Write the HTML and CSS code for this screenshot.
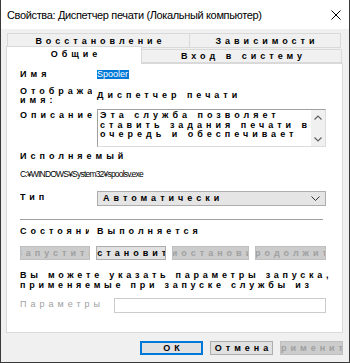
FILE: index.html
```html
<!DOCTYPE html>
<html lang="ru">
  <head>
    <meta charset="UTF-8" />
    <title>Свойства: Диспетчер печати</title>
    <link rel="stylesheet" href="styles.css">
  </head>
  <body>
    <div class="window">
      <div class="titlebar">
        <span class="title">Свойства: Диспетчер печати (Локальный компьютер)</span>
        <svg class="close" width="10" height="10" viewBox="0 0 10 10">
          <path d="M0.5 0.5 L9.5 9.5 M9.5 0.5 L0.5 9.5" stroke="#000" stroke-width="1" fill="none"/>
        </svg>
      </div>
      <div class="dialog">
        <div class="tabrow back">
          <div class="tab tab-restore"><span>Восстановление</span></div>
          <div class="tab tab-deps"><span>Зависимости</span></div>
        </div>
        <div class="tabrow front">
          <div class="tab tab-general active"><span>Общие</span></div>
          <div class="tab tab-logon"><span>Вход в систему</span></div>
        </div>
        <div class="panel">
          <div class="row row-name">
            <div class="label">Имя</div>
            <span class="selected">Spooler</span>
          </div>
          <div class="row row-display">
            <div class="label two-lines">Отображаемое<br>имя:</div>
            <div class="value">Диспетчер печати</div>
          </div>
          <div class="row row-desc">
            <div class="label">Описание</div>
            <div class="textarea">
              <div class="textarea-text">Эта служба позволяет<br>ставить задания печати в<br>очередь и обеспечивает</div>
              <div class="scrollbar">
                <svg width="8" height="5" viewBox="0 0 8 5"><path d="M0.5 4.5 L4 1 L7.5 4.5" stroke="#606060" stroke-width="1.2" fill="none"/></svg>
                <svg width="8" height="5" viewBox="0 0 8 5"><path d="M0.5 0.5 L4 4 L7.5 0.5" stroke="#606060" stroke-width="1.2" fill="none"/></svg>
              </div>
            </div>
          </div>
          <div class="spaced exe-label">Исполняемый</div>
          <div class="path">C:¥WINDOWS¥System32¥spoolsv.exe</div>
          <div class="row row-type">
            <div class="label">Тип</div>
            <div class="combo">
              <span>Автоматически</span>
              <svg width="9" height="5" viewBox="0 0 9 5"><path d="M0.5 0.5 L4.5 4.5 L8.5 0.5" stroke="#333" stroke-width="1" fill="none"/></svg>
            </div>
          </div>
          <div class="separator"></div>
          <div class="row row-state">
            <div class="label state-label">Состояние:</div>
            <div class="value">Выполняется</div>
          </div>
          <div class="buttons">
            <div class="btn disabled w70"><span>Запустить</span></div>
            <div class="btn w70"><span>Остановить</span></div>
            <div class="btn disabled w77"><span>Приостановить</span></div>
            <div class="btn disabled w71"><span>Продолжить</span></div>
          </div>
          <div class="spaced hint">Вы можете указать параметры запуска,<br>применяемые при запуске службы из</div>
          <div class="row row-params">
            <div class="label params-label">Параметры</div>
            <div class="input"></div>
          </div>
        </div>
        <div class="footer">
          <div class="btn default"><span>ОК</span></div>
          <div class="btn"><span>Отмена</span></div>
          <div class="btn disabled"><span>Применить</span></div>
        </div>
      </div>
    </div>
  </body>
</html>
```

FILE: styles.css
```css
body {
  margin: 0;
  font-family: "Liberation Sans", Arial, sans-serif;
  color: #000;
}

.window {
  width: 350px;
  height: 363px;
  box-sizing: border-box;
  border: 1px solid #3a3a3a;
  border-top: none;
  background: #f0f0f0;
  display: flex;
  flex-direction: column;
  overflow: hidden;
}

.titlebar {
  height: 29px;
  flex-shrink: 0;
  background: #fff;
  display: flex;
  align-items: center;
  justify-content: space-between;
  padding: 0 8px 0 6px;
}

.title {
  font-size: 11px;
  letter-spacing: -0.35px;
  white-space: nowrap;
}

.close {
  display: block;
}

.dialog {
  padding: 4px 6px 0 5px;
}

/* tabs */

.tabrow {
  display: flex;
}

.tabrow.back {
  margin-left: 1px;
}

.tabrow.front {
  margin-top: -2px;
  align-items: flex-start;
}

.tab {
  box-sizing: border-box;
  border: 1px solid #d9d9d9;
  background: #f0f0f0;
  display: flex;
  align-items: center;
  justify-content: center;
  font-size: 9px;
  font-weight: bold;
  letter-spacing: 4px;
  white-space: nowrap;
  overflow: hidden;
}

.tab span {
  margin-right: -4px;
}

.tab-restore {
  width: 183px;
  height: 15px;
}

.tab-deps {
  width: 152px;
  height: 15px;
  margin-left: -1px;
}

.tab-general {
  width: 136px;
  height: 18px;
  margin-bottom: -1px;
  background: #fff;
  border-bottom: none;
  position: relative;
  z-index: 2;
  align-items: flex-start;
  padding-top: 2px;
}

.tab-logon {
  width: 201px;
  height: 14px;
  margin-top: 3px;
  margin-left: -1px;
}

/* panel */

.panel {
  width: 337px;
  height: 270px;
  box-sizing: border-box;
  border: 1px solid #d9d9d9;
  background: #fff;
  padding: 0 15px 0 13px;
  font-size: 9px;
  font-weight: bold;
  letter-spacing: 4px;
  line-height: 10px;
}

.row {
  display: flex;
  align-items: flex-start;
}

.label {
  width: 72px;
  margin-right: 5px;
  flex-shrink: 0;
  white-space: nowrap;
  overflow: hidden;
}

.spaced {
  white-space: nowrap;
}

.row-name {
  margin-top: 5px;
}

.selected {
  font-weight: normal;
  letter-spacing: 0;
  background: #0078d7;
  color: #fff;
  line-height: 9px;
  margin-top: 1px;
  padding-right: 1px;
}

.row-display {
  margin-top: 8px;
}

.two-lines {
  line-height: 9px;
}

.row-display .value {
  margin-top: 3px;
}

.row-desc {
  margin-top: 4px;
}

.row-desc .label {
  margin-top: 1px;
}

.textarea {
  width: 229px;
  height: 38px;
  box-sizing: border-box;
  border: 1px solid #a0a0a0;
  border-right-color: #dcdcdc;
  border-bottom-color: #dcdcdc;
  display: flex;
  justify-content: space-between;
}

.textarea-text {
  padding: 1px 0 0 2px;
  line-height: 9.5px;
  white-space: nowrap;
}

.scrollbar {
  width: 14px;
  background: #f0f0f0;
  display: flex;
  flex-direction: column;
  justify-content: space-between;
  align-items: center;
  padding: 5px 0 4px;
}

.scrollbar svg {
  display: block;
}

.exe-label {
  margin-top: 4px;
}

.path {
  margin-top: 8px;
  font-size: 8.5px;
  font-weight: normal;
  letter-spacing: -0.8px;
  white-space: nowrap;
}

.row-type {
  margin-top: 12px;
}

.row-type .label {
  margin-top: 1px;
}

.combo {
  width: 229px;
  height: 15px;
  box-sizing: border-box;
  border: 1px solid #adadad;
  background: #e5e5e5;
  display: flex;
  align-items: center;
  justify-content: space-between;
  padding: 0 5px 0 5px;
  line-height: 13px;
}

.combo svg {
  display: block;
}

.separator {
  margin-top: 13px;
  width: 303px;
  height: 1px;
  background: #a0a0a0;
}

.row-state {
  margin-top: 6px;
}

.state-label {
  width: 69px;
  margin-right: 8px;
}

/* buttons */

.buttons {
  margin-top: 10px;
  display: flex;
  gap: 6px;
}

.btn {
  height: 14px;
  box-sizing: border-box;
  border: 1px solid #adadad;
  background: #e1e1e1;
  display: flex;
  align-items: center;
  justify-content: center;
  overflow: hidden;
  white-space: nowrap;
  font-size: 9px;
  font-weight: bold;
  letter-spacing: 4px;
  line-height: 12px;
}

.btn span {
  margin-right: -4px;
}

.btn.disabled {
  background: #cccccc;
  border-color: #bfbfbf;
  color: #a0a0a0;
}

.w70 {
  width: 70px;
}

.w71 {
  width: 71px;
}

.w77 {
  width: 77px;
}

.hint {
  margin-top: 10px;
  letter-spacing: 3.75px;
}

.row-params {
  margin-top: 8px;
}

.params-label {
  width: 94px;
  margin-right: 0;
  margin-top: 1px;
  font-weight: normal;
  color: #a0a0a0;
}

.input {
  width: 212px;
  height: 15px;
  box-sizing: border-box;
  border: 1px solid #cccccc;
}

/* footer */

.footer {
  margin-top: 8px;
  display: flex;
  justify-content: flex-end;
  gap: 7px;
}

.footer .btn {
  width: 63px;
  height: 14px;
}

.footer .btn.default {
  border: 2px solid #0078d7;
}
```
